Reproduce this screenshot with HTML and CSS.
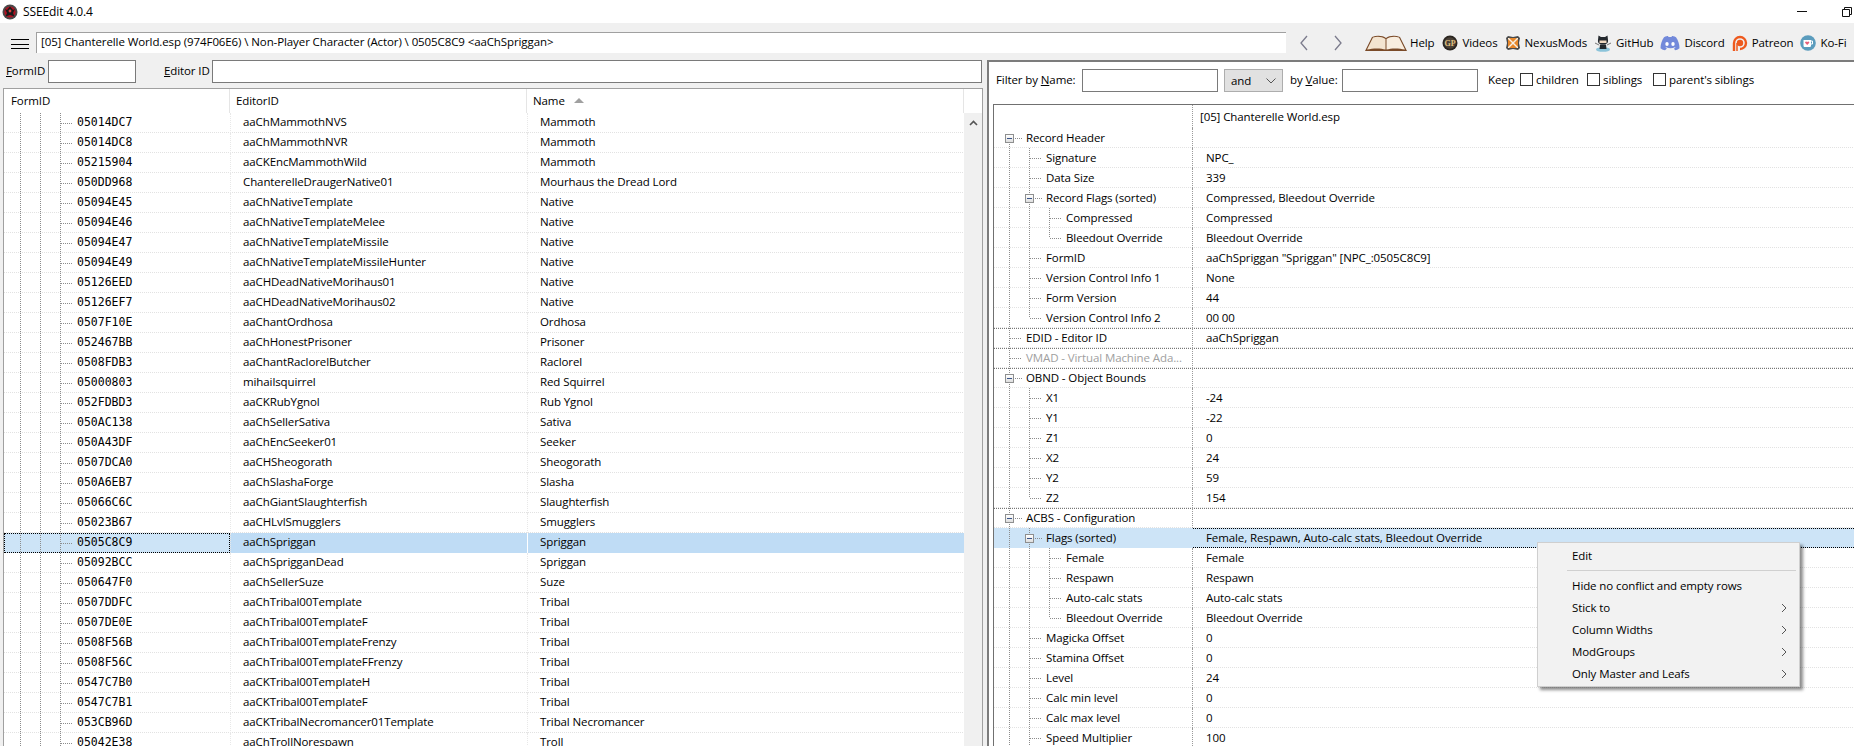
FILE: index.html
```html
<!DOCTYPE html>
<html lang="en">
<head>
<meta charset="utf-8">
<title>SSEEdit 4.0.4</title>
<link rel="stylesheet" href="styles.css">
</head>
<body>
<div class="app">
  <header class="titlebar">
    <svg class="appicon" width="16" height="16" viewBox="0 0 16 16"><circle cx="8" cy="8" r="7.5" fill="#4a4a4a"/><circle cx="8" cy="8" r="5.6" fill="#b01020"/><path d="M8 2.5 11 6 13 5 11 9 12.5 12.5 8 11 3.5 12.5 5 9 3 5 5 6Z" fill="#1a1a1a"/><circle cx="8" cy="7" r="1.4" fill="#e04040"/></svg>
    <span class="apptitle">SSEEdit 4.0.4</span>
    <div class="winctl">
      <span class="minbtn"></span>
      <svg class="restorebtn" width="11" height="10" viewBox="0 0 11 10"><path d="M2.5 2.5V.5h7v7h-2M.5 2.5h7v7h-7z" fill="#fff" stroke="#111"/></svg>
    </div>
  </header>
  <nav class="toolbar">
    <button class="burger"><i></i><i></i><i></i></button>
    <div class="pathfield">[05] Chanterelle World.esp (974F06E6) \ Non-Player Character (Actor) \ 0505C8C9 &lt;aaChSpriggan&gt;</div>
    <svg class="chev first" width="10" height="16" viewBox="0 0 10 16"><path d="M8 1 2 8l6 7" fill="none" stroke="#7b7b8c" stroke-width="1.3"/></svg>
    <svg class="chev" width="10" height="16" viewBox="0 0 10 16"><path d="M2 1l6 7-6 7" fill="none" stroke="#7b7b8c" stroke-width="1.3"/></svg>
    <div class="links">
      <a class="link l-help"><svg width="44" height="18" viewBox="0 0 44 18"><path d="M1 17 8 3C13 .8 19 1.500 22 4c3-2.500 9-3.200 14-1l7 14H1z" fill="#7a4a28"/><path d="M3 15.500 9 3.500c4-1.500 9-1 12.500 1.500v10.500C17 14 9 14 3 15.500z" fill="#f3e4d0"/><path d="M41 15.500 35 3.500c-4-1.500-9-1-12.500 1.500v10.500C27 14 35 14 41 15.500z" fill="#f8eddf"/></svg><span>Help</span></a>
      <a class="link"><svg width="16" height="16" viewBox="0 0 16 16"><circle cx="8" cy="8" r="7.500" fill="#2a2520"/><circle cx="8" cy="8" r="5.800" fill="#4a4036"/><text class="gp" x="8" y="10.800">GP</text></svg><span>Videos</span></a>
      <a class="link"><svg width="16" height="16" viewBox="0 0 16 16"><path d="M1 3 3 1 8 2 13 1 15 3 14 8 15 13 13 15 8 14 3 15 1 13 2 8Z" fill="#4a4a4a"/><path d="M3 3h10v10H3z" fill="#f7f1e6"/><path d="M3 4 7 8 3 12ZM13 4 9 8l4 4ZM4 3l4 4 4-4ZM4 13l4-4 4 4Z" fill="#e8872a"/></svg><span>NexusMods</span></a>
      <a class="link"><svg width="18" height="18" viewBox="0 0 18 18"><ellipse cx="9" cy="15.500" rx="7" ry="2.300" fill="#8cc4da"/><path d="M4 6 4.500 1.500 7 3h4l2.500-1.500L14 6c.5 3-1.500 4.500-5 4.500S3.500 9 4 6z" fill="#24292e"/><path d="M5.500 6.500h7v2.500h-7z" fill="#f0d8c0"/><path d="M6 10.500h6l.5 4.500h-7z" fill="#24292e"/><path d="M1 9 5 11M17 9l-4 2" stroke="#777" fill="none"/></svg><span>GitHub</span></a>
      <a class="link"><svg width="20" height="16" viewBox="0 0 20 16"><path d="M4 2.200C6 1.200 7.500 1 8 1l.5 1h3L12 1c.5 0 2 .2 4 1.200 2 3 3.500 6.500 3.500 11-1.500 1.200-3 1.800-4.500 2l-1-1.700 1.500-.8-.5-.4c-3 1.400-6 1.400-9 0l-.5.4 1.500.8L5 15.200c-1.500-.2-3-.8-4.500-2C.5 8.700 2 5.200 4 2.200z" fill="#7289da"/><ellipse cx="7" cy="9" rx="1.700" ry="2" fill="#fff"/><ellipse cx="13" cy="9" rx="1.700" ry="2" fill="#fff"/></svg><span>Discord</span></a>
      <a class="link"><svg width="16" height="18" viewBox="0 0 16 18"><path d="M2 17V9a6 6 0 1 1 6 6" fill="none" stroke="#ee5a1e" stroke-width="2.400"/><circle cx="8" cy="9" r="3.200" fill="#ee5a1e"/><path d="M5 17V9" stroke="#ee5a1e" stroke-width="1.500"/></svg><span>Patreon</span></a>
      <a class="link"><svg width="16" height="16" viewBox="0 0 16 16"><circle cx="8" cy="8" r="7.800" fill="#5b9cbd"/><path d="M3.500 5h7.500v5.500c0 1-.6 1.500-1.500 1.500H5c-1 0-1.500-.5-1.500-1.500z" fill="#fff"/><path d="M11 6h1.500v3H11" fill="none" stroke="#fff"/><path d="M7.200 10 5.300 8c-.8-1.200.9-2.200 1.900-1 1-1.200 2.700-.2 1.900 1z" fill="#e8607a"/></svg><span>Ko-Fi</span></a>
    </div>
  </nav>
  <main class="workspace">
    <section class="leftpane">
      <div class="searchbar">
        <label class="lbl-formid"><u>F</u>ormID</label><div class="input w-formid"></div>
        <label class="lbl-editor"><u>E</u>ditor ID</label><div class="input w-editor"></div>
      </div>
      <div class="listbox">
        <div class="listmain">
          <div class="lhead">
            <div class="c1">FormID</div><div class="c2">EditorID</div><div class="c3">Name <span class="sort"></span></div>
          </div>
          <div class="lrow"><div class="fid"><s></s><s></s><b></b><span>05014DC7</span></div><div class="eid">aaChMammothNVS</div><div class="nam">Mammoth</div></div>
          <div class="lrow"><div class="fid"><s></s><s></s><b></b><span>05014DC8</span></div><div class="eid">aaChMammothNVR</div><div class="nam">Mammoth</div></div>
          <div class="lrow"><div class="fid"><s></s><s></s><b></b><span>05215904</span></div><div class="eid">aaCKEncMammothWild</div><div class="nam">Mammoth</div></div>
          <div class="lrow"><div class="fid"><s></s><s></s><b></b><span>050DD968</span></div><div class="eid">ChanterelleDraugerNative01</div><div class="nam">Mourhaus the Dread Lord</div></div>
          <div class="lrow"><div class="fid"><s></s><s></s><b></b><span>05094E45</span></div><div class="eid">aaChNativeTemplate</div><div class="nam">Native</div></div>
          <div class="lrow"><div class="fid"><s></s><s></s><b></b><span>05094E46</span></div><div class="eid">aaChNativeTemplateMelee</div><div class="nam">Native</div></div>
          <div class="lrow"><div class="fid"><s></s><s></s><b></b><span>05094E47</span></div><div class="eid">aaChNativeTemplateMissile</div><div class="nam">Native</div></div>
          <div class="lrow"><div class="fid"><s></s><s></s><b></b><span>05094E49</span></div><div class="eid">aaChNativeTemplateMissileHunter</div><div class="nam">Native</div></div>
          <div class="lrow"><div class="fid"><s></s><s></s><b></b><span>05126EED</span></div><div class="eid">aaCHDeadNativeMorihaus01</div><div class="nam">Native</div></div>
          <div class="lrow"><div class="fid"><s></s><s></s><b></b><span>05126EF7</span></div><div class="eid">aaCHDeadNativeMorihaus02</div><div class="nam">Native</div></div>
          <div class="lrow"><div class="fid"><s></s><s></s><b></b><span>0507F10E</span></div><div class="eid">aaChantOrdhosa</div><div class="nam">Ordhosa</div></div>
          <div class="lrow"><div class="fid"><s></s><s></s><b></b><span>052467BB</span></div><div class="eid">aaChHonestPrisoner</div><div class="nam">Prisoner</div></div>
          <div class="lrow"><div class="fid"><s></s><s></s><b></b><span>0508FDB3</span></div><div class="eid">aaChantRaclorelButcher</div><div class="nam">Raclorel</div></div>
          <div class="lrow"><div class="fid"><s></s><s></s><b></b><span>05000803</span></div><div class="eid">mihailsquirrel</div><div class="nam">Red Squirrel</div></div>
          <div class="lrow"><div class="fid"><s></s><s></s><b></b><span>052FDBD3</span></div><div class="eid">aaCKRubYgnol</div><div class="nam">Rub Ygnol</div></div>
          <div class="lrow"><div class="fid"><s></s><s></s><b></b><span>050AC138</span></div><div class="eid">aaChSellerSativa</div><div class="nam">Sativa</div></div>
          <div class="lrow"><div class="fid"><s></s><s></s><b></b><span>050A43DF</span></div><div class="eid">aaChEncSeeker01</div><div class="nam">Seeker</div></div>
          <div class="lrow"><div class="fid"><s></s><s></s><b></b><span>0507DCA0</span></div><div class="eid">aaCHSheogorath</div><div class="nam">Sheogorath</div></div>
          <div class="lrow"><div class="fid"><s></s><s></s><b></b><span>050A6EB7</span></div><div class="eid">aaChSlashaForge</div><div class="nam">Slasha</div></div>
          <div class="lrow"><div class="fid"><s></s><s></s><b></b><span>05066C6C</span></div><div class="eid">aaChGiantSlaughterfish</div><div class="nam">Slaughterfish</div></div>
          <div class="lrow"><div class="fid"><s></s><s></s><b></b><span>05023B67</span></div><div class="eid">aaCHLvlSmugglers</div><div class="nam">Smugglers</div></div>
          <div class="lrow sel"><div class="fid"><s></s><s></s><b></b><span>0505C8C9</span></div><div class="eid">aaChSpriggan</div><div class="nam">Spriggan</div></div>
          <div class="lrow"><div class="fid"><s></s><s></s><b></b><span>05092BCC</span></div><div class="eid">aaChSprigganDead</div><div class="nam">Spriggan</div></div>
          <div class="lrow"><div class="fid"><s></s><s></s><b></b><span>050647F0</span></div><div class="eid">aaChSellerSuze</div><div class="nam">Suze</div></div>
          <div class="lrow"><div class="fid"><s></s><s></s><b></b><span>0507DDFC</span></div><div class="eid">aaChTribal00Template</div><div class="nam">Tribal</div></div>
          <div class="lrow"><div class="fid"><s></s><s></s><b></b><span>0507DE0E</span></div><div class="eid">aaChTribal00TemplateF</div><div class="nam">Tribal</div></div>
          <div class="lrow"><div class="fid"><s></s><s></s><b></b><span>0508F56B</span></div><div class="eid">aaChTribal00TemplateFrenzy</div><div class="nam">Tribal</div></div>
          <div class="lrow"><div class="fid"><s></s><s></s><b></b><span>0508F56C</span></div><div class="eid">aaChTribal00TemplateFFrenzy</div><div class="nam">Tribal</div></div>
          <div class="lrow"><div class="fid"><s></s><s></s><b></b><span>0547C7B0</span></div><div class="eid">aaCKTribal00TemplateH</div><div class="nam">Tribal</div></div>
          <div class="lrow"><div class="fid"><s></s><s></s><b></b><span>0547C7B1</span></div><div class="eid">aaCKTribal00TemplateF</div><div class="nam">Tribal</div></div>
          <div class="lrow"><div class="fid"><s></s><s></s><b></b><span>053CB96D</span></div><div class="eid">aaCKTribalNecromancer01Template</div><div class="nam">Tribal Necromancer</div></div>
          <div class="lrow"><div class="fid"><s></s><s></s><b></b><span>05042E38</span></div><div class="eid">aaChTrollNorespawn</div><div class="nam">Troll</div></div>
        </div>
        <div class="vscroll"><svg class="scrollup" width="9" height="6" viewBox="0 0 9 6"><path d="M1 5l3.500-3.500L8 5" fill="none" stroke="#555" stroke-width="1.600"/></svg></div>
      </div>
    </section>
    <section class="rightpane">
      <div class="filterbar">
        <label class="f-name">Filter by <u>N</u>ame:</label><div class="input w-fname"></div>
        <div class="select">and<svg width="10" height="6" viewBox="0 0 10 6"><path d="M.5.500 5 5 9.500.500" fill="none" stroke="#555"/></svg></div>
        <label class="f-value">by <u>V</u>alue:</label><div class="input w-fvalue"></div>
        <label class="f-keep">Keep</label>
        <span class="cb"></span><label class="f-children">children</label>
        <span class="cb"></span><label class="f-siblings">siblings</label>
        <span class="cb"></span><label>parent's siblings</label>
      </div>
      <div class="tree">
        <div class="thead"><div class="tn"></div><div class="tv first">[05] Chanterelle World.esp</div></div>
        <div class="trow"><div class="tn"><span class="box top"><i></i></span><label>Record Header</label></div><div class="tv"></div></div>
        <div class="trow"><div class="tn"><s></s><span class="tee"></span><label>Signature</label></div><div class="tv">NPC_</div></div>
        <div class="trow"><div class="tn"><s></s><span class="tee"></span><label>Data Size</label></div><div class="tv">339</div></div>
        <div class="trow"><div class="tn"><s></s><span class="box"><i></i></span><label>Record Flags (sorted)</label></div><div class="tv">Compressed, Bleedout Override</div></div>
        <div class="trow"><div class="tn"><s></s><s></s><span class="tee"></span><label>Compressed</label></div><div class="tv">Compressed</div></div>
        <div class="trow"><div class="tn"><s></s><s></s><span class="elbow"></span><label>Bleedout Override</label></div><div class="tv">Bleedout Override</div></div>
        <div class="trow"><div class="tn"><s></s><span class="tee"></span><label>FormID</label></div><div class="tv">aaChSpriggan "Spriggan" [NPC_:0505C8C9]</div></div>
        <div class="trow"><div class="tn"><s></s><span class="tee"></span><label>Version Control Info 1</label></div><div class="tv">None</div></div>
        <div class="trow"><div class="tn"><s></s><span class="tee"></span><label>Form Version</label></div><div class="tv">44</div></div>
        <div class="trow"><div class="tn"><s></s><span class="elbow"></span><label>Version Control Info 2</label></div><div class="tv">00 00</div></div>
        <div class="trow group"><div class="tn"><span class="tee"></span><label>EDID - Editor ID</label></div><div class="tv">aaChSpriggan</div></div>
        <div class="trow group"><div class="tn"><span class="tee"></span><label class="off">VMAD - Virtual Machine Ada...</label></div><div class="tv"></div></div>
        <div class="trow group"><div class="tn"><span class="box"><i></i></span><label>OBND - Object Bounds</label></div><div class="tv"></div></div>
        <div class="trow"><div class="tn"><s></s><span class="tee"></span><label>X1</label></div><div class="tv">-24</div></div>
        <div class="trow"><div class="tn"><s></s><span class="tee"></span><label>Y1</label></div><div class="tv">-22</div></div>
        <div class="trow"><div class="tn"><s></s><span class="tee"></span><label>Z1</label></div><div class="tv">0</div></div>
        <div class="trow"><div class="tn"><s></s><span class="tee"></span><label>X2</label></div><div class="tv">24</div></div>
        <div class="trow"><div class="tn"><s></s><span class="tee"></span><label>Y2</label></div><div class="tv">59</div></div>
        <div class="trow"><div class="tn"><s></s><span class="elbow"></span><label>Z2</label></div><div class="tv">154</div></div>
        <div class="trow group"><div class="tn"><span class="box"><i></i></span><label>ACBS - Configuration</label></div><div class="tv"></div></div>
        <div class="trow sel"><div class="tn"><s></s><span class="box"><i></i></span><label>Flags (sorted)</label></div><div class="tv">Female, Respawn, Auto-calc stats, Bleedout Override</div></div>
        <div class="trow"><div class="tn"><s></s><s></s><span class="tee"></span><label>Female</label></div><div class="tv">Female</div></div>
        <div class="trow"><div class="tn"><s></s><s></s><span class="tee"></span><label>Respawn</label></div><div class="tv">Respawn</div></div>
        <div class="trow"><div class="tn"><s></s><s></s><span class="tee"></span><label>Auto-calc stats</label></div><div class="tv">Auto-calc stats</div></div>
        <div class="trow"><div class="tn"><s></s><s></s><span class="elbow"></span><label>Bleedout Override</label></div><div class="tv">Bleedout Override</div></div>
        <div class="trow"><div class="tn"><s></s><span class="tee"></span><label>Magicka Offset</label></div><div class="tv">0</div></div>
        <div class="trow"><div class="tn"><s></s><span class="tee"></span><label>Stamina Offset</label></div><div class="tv">0</div></div>
        <div class="trow"><div class="tn"><s></s><span class="tee"></span><label>Level</label></div><div class="tv">24</div></div>
        <div class="trow"><div class="tn"><s></s><span class="tee"></span><label>Calc min level</label></div><div class="tv">0</div></div>
        <div class="trow"><div class="tn"><s></s><span class="tee"></span><label>Calc max level</label></div><div class="tv">0</div></div>
        <div class="trow"><div class="tn"><s></s><span class="tee"></span><label>Speed Multiplier</label></div><div class="tv">100</div></div>
      </div>
    </section>
  </main>
  <div class="menu">
    <div class="mi first">Edit</div>
    <div class="msep"></div>
    <div class="mi">Hide no conflict and empty rows</div>
    <div class="mi">Stick to<svg width="6" height="10" viewBox="0 0 6 10"><path d="M1 1l4 4-4 4" fill="none" stroke="#555"/></svg></div>
    <div class="mi">Column Widths<svg width="6" height="10" viewBox="0 0 6 10"><path d="M1 1l4 4-4 4" fill="none" stroke="#555"/></svg></div>
    <div class="mi">ModGroups<svg width="6" height="10" viewBox="0 0 6 10"><path d="M1 1l4 4-4 4" fill="none" stroke="#555"/></svg></div>
    <div class="mi">Only Master and Leafs<svg width="6" height="10" viewBox="0 0 6 10"><path d="M1 1l4 4-4 4" fill="none" stroke="#555"/></svg></div>
  </div>
</div>
</body>
</html>
```
FILE: styles.css
```css
* { box-sizing: border-box; }
html, body { margin: 0; height: 100%; overflow: hidden; background: #fff; }
body { font: 11.5px/16px "Open Sans", "Noto Sans", sans-serif; letter-spacing: -.1px; color: #000; }
label { display: block; white-space: nowrap; }

.app { position: relative; width: 1854px; height: 746px; overflow: hidden; display: flex; flex-direction: column; }

/* title bar */
.titlebar { height: 23px; flex: none; display: flex; align-items: center; padding-left: 2px; background: #fff; }
.appicon { flex: none; }
.apptitle { margin-left: 5px; font-size: 12px; }
.winctl { margin-left: auto; display: flex; align-items: center; }
.minbtn { width: 10px; height: 1px; background: #111; margin-right: 35px; }
.restorebtn { margin-right: 1px; }

/* tool bar */
.toolbar { height: 37px; flex: none; display: flex; align-items: flex-start; background: #f0f0f0; padding-top: 9px; }
.burger { flex: none; width: 18px; height: 10px; margin: 7px 0 0 11px; padding: 0; border: 0; background: none; display: flex; flex-direction: column; justify-content: space-between; }
.burger i { display: block; height: 1px; background: #000; }
.pathfield { flex: none; width: 1250px; height: 21px; margin-left: 7px; padding: 1px 4px; background: #fff; border-left: 1px solid #a0a0a0; border-top: 1px solid #a0a0a0; }
.chev { flex: none; margin-top: 3px; }
.chev.first { margin-left: 13px; margin-right: 24px; }
.links { flex: none; display: flex; align-items: center; height: 20px; margin-left: 21px; margin-top: 1px; }
.link { display: flex; align-items: center; gap: 4px; margin-right: 7px; white-space: nowrap; }
.l-help { gap: 2px; margin-right: 8px; }
.gp { font: 700 8px "Liberation Serif", serif; fill: #e0c080; text-anchor: middle; }

/* layout */
.workspace { flex: 1; display: flex; min-height: 0; }
.leftpane { width: 987px; flex: none; background: #f0f0f0; display: flex; flex-direction: column; }
.rightpane { flex: 1; background: #fff; border-left: 2px solid #7c7c7c; border-top: 2px solid #7c7c7c; display: flex; flex-direction: column; min-width: 0; }

.input { height: 23px; background: #fff; border: 1px solid #7a7a7a; }
.searchbar { height: 28px; flex: none; display: flex; align-items: flex-start; }
.searchbar label { margin-top: 3px; }
.lbl-formid { margin-left: 6px; width: 42px; }
.w-formid { width: 88px; }
.lbl-editor { margin-left: 28px; width: 48px; }
.w-editor { width: 770px; }

/* record list */
.listbox { flex: 1; margin-left: 3px; margin-right: 4px; border: 1px solid #a0a0a0; border-bottom: 0; background: #fff; display: flex; min-height: 0; overflow: hidden; }
.listmain { width: 960px; flex: none; }
.lhead { height: 24px; display: flex; align-items: center; }
.lhead > div { height: 24px; line-height: 22px; padding-top: 1px; border-right: 1px solid #e5e5e5; white-space: nowrap; }
.lhead .c1 { width: 226px; padding-left: 7px; }
.lhead .c2 { width: 297px; padding-left: 6px; }
.lhead .c3 { width: 437px; padding-left: 6px; }
.sort { display: inline-block; width: 0; height: 0; margin-left: 6px; vertical-align: 2px; border: 5px solid transparent; border-top: 0; border-bottom: 5px solid #a0a0a0; }
.lrow { height: 20px; display: flex; background: repeating-linear-gradient(to right, #e2e2e2 0 1px, transparent 1px 2px) left bottom / 100% 1px no-repeat; }
.fid { width: 226px; padding-left: 7px; display: flex; align-items: center; font: 11.5px/16px "DejaVu Sans Mono", monospace; letter-spacing: 0; }
.eid { width: 297px; padding-left: 12px; line-height: 18px; border-left: 1px dotted #e8e8e8; }
.nam { flex: 1; padding-left: 12px; line-height: 18px; border-left: 1px dotted #e8e8e8; }
.fid s, .tn s { flex: none; align-self: stretch; width: 20px; background: repeating-linear-gradient(to bottom, #8c8c8c 0 1px, transparent 1px 2px) 9px 0 / 1px 100% no-repeat; }
.fid b { flex: none; align-self: stretch; width: 22px; background: repeating-linear-gradient(to bottom, #8c8c8c 0 1px, transparent 1px 2px) 9px 0 / 1px 100% no-repeat, repeating-linear-gradient(to right, #8c8c8c 0 1px, transparent 1px 2px) 10px 10px / 12px 1px no-repeat; }
.fid span { margin: 0 0 2px 4px; }
.lrow.sel { background: #bfdcf5; }
.lrow.sel .fid { background: #cde4f7; outline: 1px dotted #000; outline-offset: -1px; }
.lrow.sel .eid, .lrow.sel .nam { background: #bfdcf5; }
.lrow.sel .nam { border-left: 1px solid #fff; }
.vscroll { flex: 1; margin-top: 24px; background: #f0f0f0; display: flex; justify-content: center; align-items: flex-start; padding-top: 7px; }

/* filter bar */
.filterbar { height: 42px; flex: none; display: flex; align-items: flex-start; padding: 7px 0 0 7px; }
.filterbar label { margin-top: 3px; }
.f-name { width: 86px; }
.w-fname { width: 136px; }
.select { width: 59px; height: 23px; margin-left: 6px; padding: 3px 6px; background: #e1e1e1; border: 1px solid #adadad; display: flex; justify-content: space-between; align-items: center; }
.f-value { margin-left: 7px; width: 52px; }
.w-fvalue { width: 136px; }
.f-keep { margin-left: 10px; width: 32px; }
.cb { flex: none; width: 13px; height: 13px; margin: 4px 3px 0 0; background: #fff; border: 1px solid #333; }
.f-children { width: 51px; }
.f-siblings { width: 50px; }

/* record tree */
.tree { flex: 1; margin-left: 4px; border-left: 1px solid #707070; border-top: 1px solid #707070; min-height: 0; overflow: hidden; }
.thead { height: 23px; display: flex; }
.thead .tv.first { padding-left: 7px; line-height: 23px; }
.trow { height: 20px; display: flex; background: repeating-linear-gradient(to right, #e2e2e2 0 1px, transparent 1px 2px) left bottom / 100% 1px no-repeat; }
.trow.group { background: repeating-linear-gradient(to right, #e2e2e2 0 1px, transparent 1px 2px) left bottom / 100% 1px no-repeat, repeating-linear-gradient(to right, #777 0 1px, transparent 1px 2px) left top / 100% 1px no-repeat; }
.tn { width: 199px; flex: none; display: flex; padding-left: 6px; line-height: 19px; white-space: nowrap; border-right: 1px dotted #9a9a9a; }
.tv { flex: 1; padding-left: 13px; line-height: 19px; white-space: nowrap; }
.tn label { margin-left: 4px; }
.off { color: #a0a0a0; }
.tee, .elbow, .box { flex: none; width: 22px; }
.tee { background: repeating-linear-gradient(to bottom, #8c8c8c 0 1px, transparent 1px 2px) 9px 0 / 1px 100% no-repeat, repeating-linear-gradient(to right, #8c8c8c 0 1px, transparent 1px 2px) 10px 10px / 12px 1px no-repeat; }
.elbow { background: repeating-linear-gradient(to bottom, #8c8c8c 0 1px, transparent 1px 2px) 9px 0 / 1px 10px no-repeat, repeating-linear-gradient(to right, #8c8c8c 0 1px, transparent 1px 2px) 10px 10px / 12px 1px no-repeat; }
.box { display: flex; align-items: center; padding-left: 5px; background: repeating-linear-gradient(to bottom, #8c8c8c 0 1px, transparent 1px 2px) 9px 0 / 1px 100% no-repeat, repeating-linear-gradient(to right, #8c8c8c 0 1px, transparent 1px 2px) 15px 10px / 7px 1px no-repeat; }
.box.top { background: repeating-linear-gradient(to bottom, #8c8c8c 0 1px, transparent 1px 2px) 9px 10px / 1px 10px no-repeat, repeating-linear-gradient(to right, #8c8c8c 0 1px, transparent 1px 2px) 15px 10px / 7px 1px no-repeat; }
.box i { width: 9px; height: 9px; margin-top: 1px; border: 1px solid #8e8f8f; background: linear-gradient(#fff, #dedede); display: flex; align-items: center; justify-content: center; }
.box i::after { content: ""; width: 5px; height: 1px; background: #3a5488; }
.trow.sel { background: #cde4f7; }
.trow.sel .tn { border-right: 0; }
.trow.sel .tv { border-top: 1px dotted #000; border-bottom: 1px dotted #000; line-height: 17px; }

/* context menu */
.menu { position: absolute; left: 1537px; top: 542px; width: 263px; height: 145px; background: #f2f2f2; border: 1px solid #cfcfcf; box-shadow: 3px 3px 3px rgba(0,0,0,.45); padding-top: 2px; }
.mi { height: 22px; padding-left: 34px; padding-right: 12px; line-height: 22px; display: flex; justify-content: space-between; align-items: center; }
.mi.first { height: 21px; }
.msep { height: 1px; margin: 4px 3px 4px 29px; background: #d0d0d0; }
```
